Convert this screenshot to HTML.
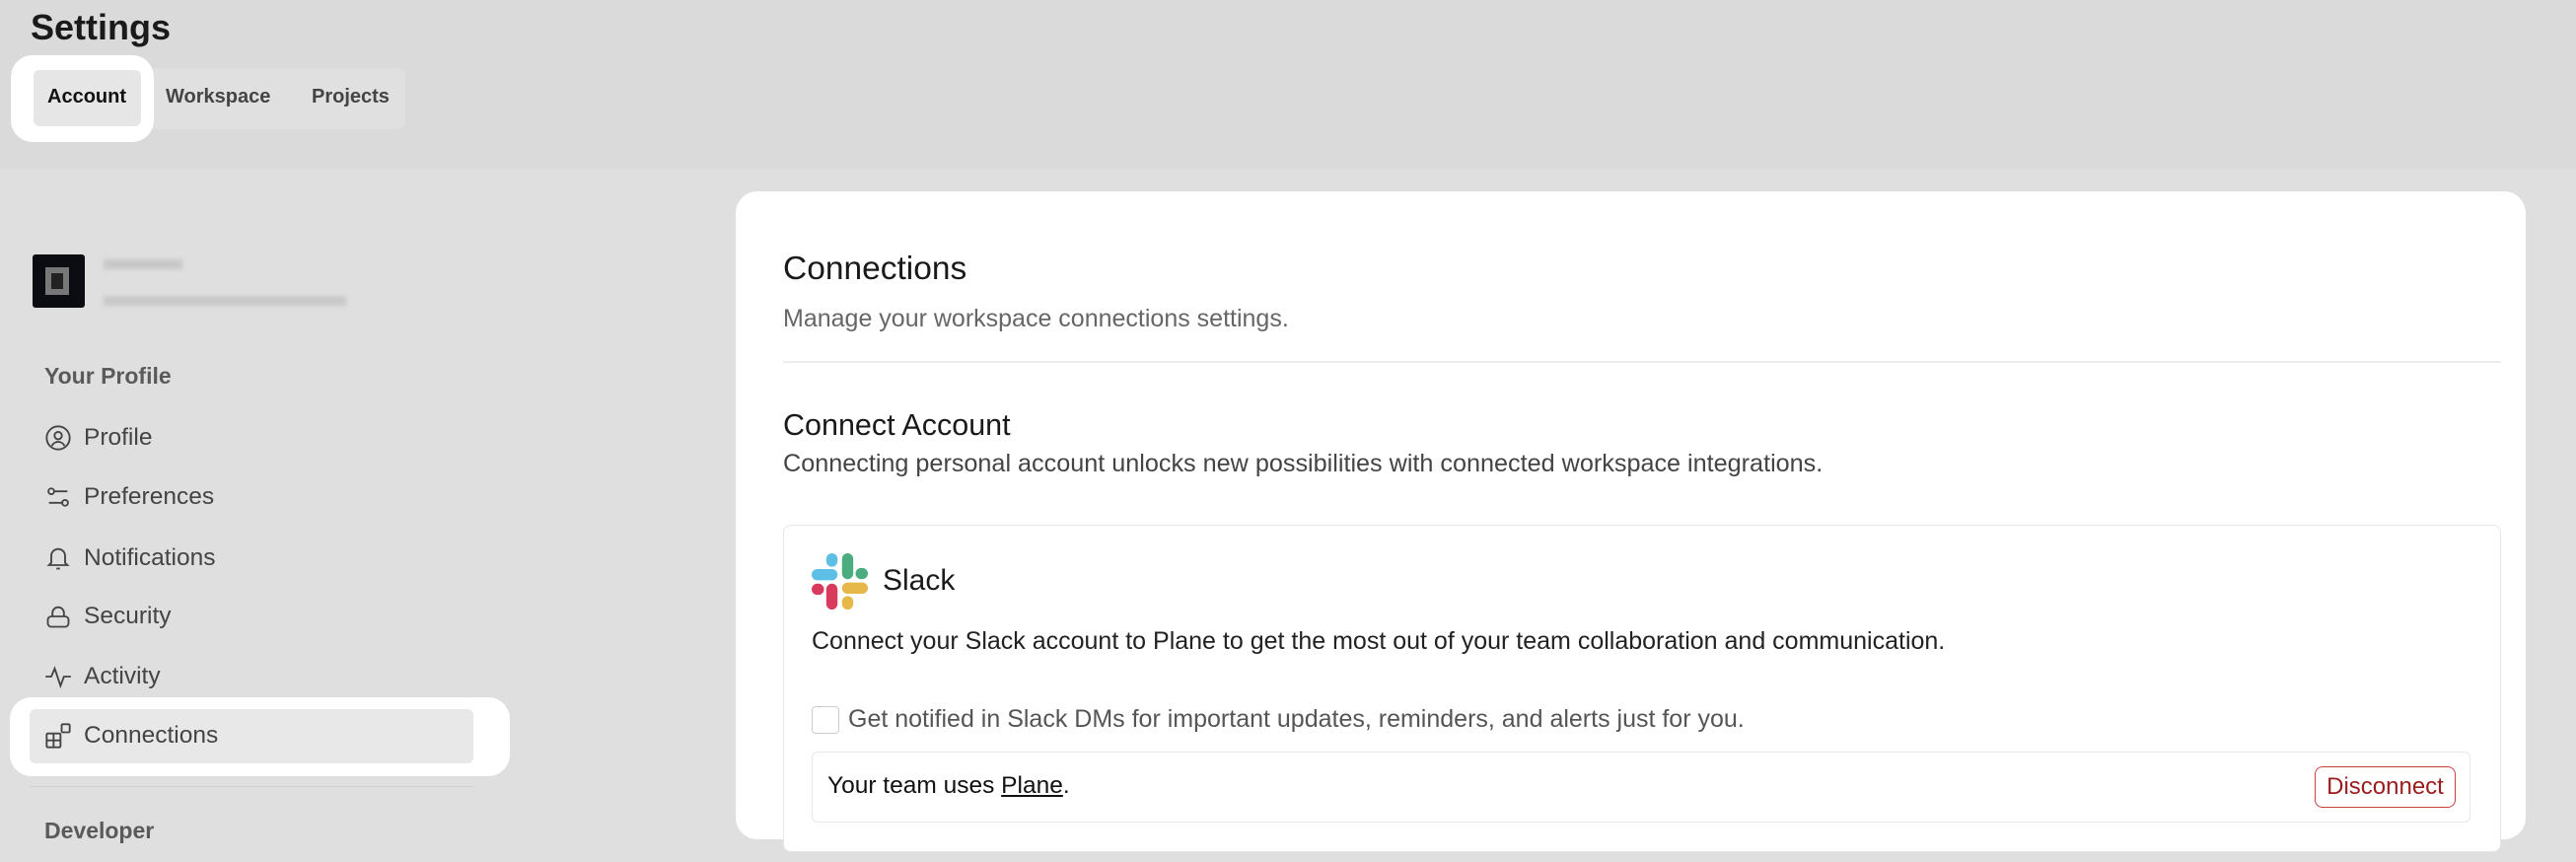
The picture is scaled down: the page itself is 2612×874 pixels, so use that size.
<!DOCTYPE html>
<html><head><meta charset="utf-8"><style>
*{box-sizing:border-box;margin:0;padding:0}
body{width:2612px;height:874px;overflow:hidden;background:#dfdfdf;font-family:"Liberation Sans",sans-serif;position:relative;color:#222}
.hdr{position:absolute;left:0;top:0;width:2612px;height:172px;background:#dadada}
.abs{position:absolute}
.title{left:31px;top:7px;font-size:36px;font-weight:bold;color:#1a1a1a}
.tabbar{left:33px;top:69px;width:378px;height:62px;background:#e0e0e0;border-radius:8px}
.ring1{left:11px;top:56px;width:145px;height:88px;background:#fff;border-radius:22px}
.acc{left:34px;top:71px;width:109px;height:57px;background:#e6e6e6;border-radius:6px}
.tab{top:87px;font-size:20px;font-weight:bold;color:#444}
.av{left:33px;top:258px;width:53px;height:54px;background:#0b0b12;border-radius:3px}
.av i{position:absolute;left:13px;top:13px;width:24px;height:28px;border:6px solid #777;background:#222}
.blur{background:#c8c8c8;filter:blur(2px);height:10px}
.sec{font-size:23px;font-weight:bold;color:#5a5a5a}
.it{left:45px;font-size:24.5px;color:#444;display:flex;align-items:center}
.it svg{width:28px;height:28px;margin-right:12px}
.ring2{left:10px;top:707px;width:507px;height:80px;background:#fff;border-radius:22px}
.hl{left:30px;top:719px;width:450px;height:55px;background:#e8e8e8;border-radius:6px}
.card{left:746px;top:194px;width:1815px;height:657px;background:#fff;border-radius:22px}
.t{white-space:nowrap}
</style></head><body>
<div class="hdr"></div>
<div class="abs title">Settings</div>
<div class="abs tabbar"></div>
<div class="abs ring1"></div>
<div class="abs acc"></div>
<div class="abs tab" style="left:48px;color:#111">Account</div>
<div class="abs tab" style="left:168px">Workspace</div>
<div class="abs tab" style="left:316px">Projects</div>

<div class="abs av"><i></i></div>
<div class="abs blur" style="left:105px;top:263px;width:80px"></div>
<div class="abs blur" style="left:105px;top:300px;width:246px"></div>

<div class="abs sec" style="left:45px;top:368px">Your Profile</div>
<div class="abs ring2"></div>
<div class="abs hl"></div>
<div class="abs it" style="top:430px"><svg viewBox="0 0 24 24" fill="none" stroke="#444" stroke-width="1.6"><circle cx="12" cy="12" r="10"/><circle cx="12" cy="10" r="3.2"/><path d="M6.5 19a6 6 0 0 1 11 0"/></svg>Profile</div>
<div class="abs it" style="top:490px"><svg viewBox="0 0 24 24" fill="none" stroke="#444" stroke-width="1.6"><circle cx="6" cy="7" r="2.5"/><path d="M8.5 7H20M4 17h11.5"/><circle cx="18" cy="17" r="2.5"/></svg>Preferences</div>
<div class="abs it" style="top:552px"><svg viewBox="0 0 24 24" fill="none" stroke="#444" stroke-width="1.6"><path d="M6 16V10a6 6 0 0 1 12 0v6l2 2H4z"/><path d="M10.5 21h3"/></svg>Notifications</div>
<div class="abs it" style="top:611px"><svg viewBox="0 0 24 24" fill="none" stroke="#444" stroke-width="1.6"><rect x="3" y="12" width="18" height="9" rx="3"/><path d="M7 12V9a5 5 0 0 1 10 0v3"/></svg>Security</div>
<div class="abs it" style="top:672px"><svg viewBox="0 0 24 24" fill="none" stroke="#444" stroke-width="1.6"><path d="M1 12h5l3-7 5 15 3-8h6"/></svg>Activity</div>
<div class="abs it" style="top:732px"><svg viewBox="0 0 24 24" fill="none" stroke="#444" stroke-width="1.6"><rect x="2" y="10" width="12" height="12" rx="1"/><path d="M8 10v12M2 16h12"/><rect x="15" y="2" width="7" height="7" rx="1"/></svg>Connections</div>
<div class="abs" style="left:30px;top:797px;width:450px;height:1px;background:#d2d2d2"></div>
<div class="abs sec" style="left:45px;top:829px">Developer</div>

<div class="abs card"></div>
<div class="abs t" style="left:794px;top:254px;font-size:33.5px;color:#1a1a1a">Connections</div>
<div class="abs t" style="left:794px;top:309px;font-size:25px;color:#666">Manage your workspace connections settings.</div>
<div class="abs" style="left:794px;top:366px;width:1742px;height:2px;background:#ececec"></div>
<div class="abs t" style="left:794px;top:414px;font-size:30.5px;color:#1a1a1a">Connect Account</div>
<div class="abs t" style="left:794px;top:456px;font-size:25.2px;color:#444">Connecting personal account unlocks new possibilities with connected workspace integrations.</div>
<div class="abs" style="left:794px;top:532px;width:1742px;height:332px;border:1.5px solid #e6e6e6;border-radius:8px;background:#fff"></div>
<svg class="abs" style="left:823px;top:561px" width="57" height="57" viewBox="0 0 100 100">
<rect x="0" y="28" width="46" height="20" rx="10" fill="#5ebfe6"/><rect x="26" y="0" width="20" height="24" rx="10" fill="#5ebfe6"/>
<rect x="54" y="0" width="20" height="46" rx="10" fill="#4bad7f"/><rect x="78" y="26" width="22" height="20" rx="10" fill="#4bad7f"/>
<rect x="0" y="54" width="22" height="20" rx="10" fill="#d83b5e"/><rect x="26" y="54" width="20" height="46" rx="10" fill="#d83b5e"/>
<rect x="54" y="52" width="46" height="20" rx="10" fill="#e6b84a"/><rect x="54" y="76" width="20" height="24" rx="10" fill="#e6b84a"/>
</svg>
<div class="abs t" style="left:895px;top:572px;font-size:30px;color:#1a1a1a">Slack</div>
<div class="abs t" style="left:823px;top:636px;font-size:25px;color:#222">Connect your Slack account to Plane to get the most out of your team collaboration and communication.</div>
<div class="abs" style="left:823px;top:716px;width:28px;height:28px;border:1.5px solid #ccc;border-radius:4px"></div>
<div class="abs t" style="left:860px;top:715px;font-size:25px;color:#555">Get notified in Slack DMs for important updates, reminders, and alerts just for you.</div>
<div class="abs" style="left:823px;top:762px;width:1682px;height:72px;border:1.5px solid #e8e8e8;border-radius:6px"></div>
<div class="abs t" style="left:839px;top:783px;font-size:24.5px;color:#111">Your team uses <u>Plane</u>.</div>
<div class="abs t" style="left:2347px;top:777px;width:143px;height:42px;border:1.5px solid #c94040;border-radius:8px;color:#9b1c1c;font-size:24px;text-align:center;line-height:39px">Disconnect</div>
</body></html>
